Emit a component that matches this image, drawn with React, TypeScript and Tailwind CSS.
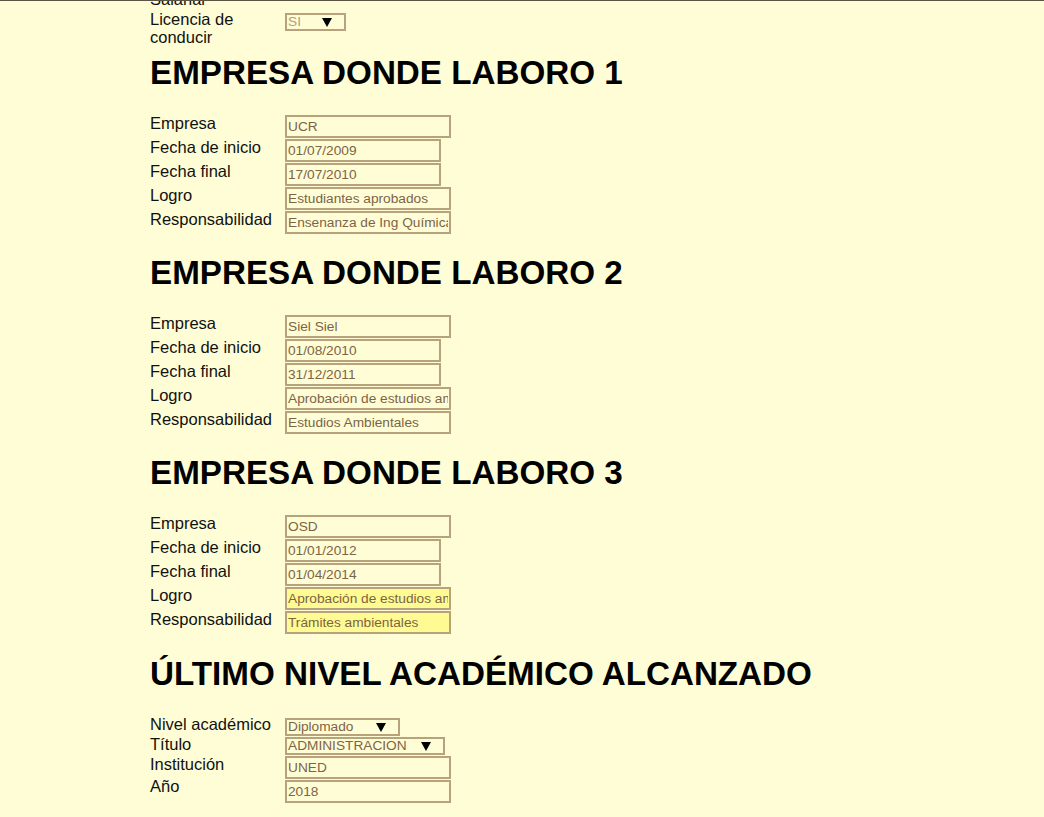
import React from "react";

type Field = { label: string; value: string; w: number; hl?: boolean };

const jobs: { title: string; fields: Field[] }[] = [
  {
    title: "EMPRESA DONDE LABORO 1",
    fields: [
      { label: "Empresa", value: "UCR", w: 166 },
      { label: "Fecha de inicio", value: "01/07/2009", w: 156 },
      { label: "Fecha final", value: "17/07/2010", w: 156 },
      { label: "Logro", value: "Estudiantes aprobados", w: 166 },
      { label: "Responsabilidad", value: "Ensenanza de Ing Química", w: 166 },
    ],
  },
  {
    title: "EMPRESA DONDE LABORO 2",
    fields: [
      { label: "Empresa", value: "Siel Siel", w: 166 },
      { label: "Fecha de inicio", value: "01/08/2010", w: 156 },
      { label: "Fecha final", value: "31/12/2011", w: 156 },
      { label: "Logro", value: "Aprobación de estudios ambientales", w: 166 },
      { label: "Responsabilidad", value: "Estudios Ambientales", w: 166 },
    ],
  },
  {
    title: "EMPRESA DONDE LABORO 3",
    fields: [
      { label: "Empresa", value: "OSD", w: 166 },
      { label: "Fecha de inicio", value: "01/01/2012", w: 156 },
      { label: "Fecha final", value: "01/04/2014", w: 156 },
      { label: "Logro", value: "Aprobación de estudios ambientales", w: 166, hl: true },
      { label: "Responsabilidad", value: "Trámites ambientales", w: 166, hl: true },
    ],
  },
];

function Caret() {
  return (
    <svg width="10" height="9" viewBox="0 0 10 9" className="shrink-0">
      <polygon points="0,0 10,0 5,9" fill="#000" />
    </svg>
  );
}

function FakeSelect({ value, w, light }: { value: string; w: number; light?: boolean }) {
  return (
    <div
      className={`flex h-[18px] items-center justify-between border-2 border-[#b8a27c] pl-px pr-[12px] text-[13.7px] leading-none ${
        light ? "text-[#b39d7b]" : "text-[#7d6445]"
      }`}
      style={{ width: w }}
    >
      <span>{value}</span>
      <Caret />
    </div>
  );
}

function TextBox({ value, w, hl }: { value: string; w: number; hl?: boolean }) {
  return (
    <input
      readOnly
      value={value}
      className={`h-[23px] border-2 border-[#b8a27c] px-px font-['Liberation_Sans',Arial,sans-serif] text-[13.7px] text-[#7d6445] outline-none ${
        hl ? "bg-[#fdfb92]" : "bg-transparent"
      }`}
      style={{ width: w }}
    />
  );
}

function Label({ children }: { children: React.ReactNode }) {
  return <div className="w-[135px] shrink-0 text-[16.5px] leading-[18px] text-[#111]">{children}</div>;
}

function Heading({ children, first }: { children: React.ReactNode; first?: boolean }) {
  return (
    <h1 className={`${first ? "mt-[8px]" : "mt-[19px]"} mb-[23px] text-[33.2px] font-bold leading-[38px] text-black`}>
      {children}
    </h1>
  );
}

export default function App() {
  return (
    <div className="h-[817px] overflow-hidden border-t border-[#5b5442] bg-[#fffdd6] font-['Liberation_Sans',Arial,sans-serif]">
      <div className="-mt-[11px] pl-[150px]">
        <div className="flex">
          <Label>Salarial</Label>
        </div>
        <div className="mt-[2px] flex items-start">
          <Label>
            Licencia de
            <br />
            conducir
          </Label>
          <div className="mt-[3px]">
            <FakeSelect value="SI" w={61} light />
          </div>
        </div>

        {jobs.map((job, i) => (
          <section key={job.title}>
            <Heading first={i === 0}>{job.title}</Heading>
            {job.fields.map((f) => (
              <div key={f.label} className="flex h-[24px] items-start">
                <div className="-mt-px">
                  <Label>{f.label}</Label>
                </div>
                <TextBox value={f.value} w={f.w} hl={f.hl} />
              </div>
            ))}
          </section>
        ))}

        <section>
          <h1 className="mt-[20px] mb-[25px] text-[33.2px] font-bold leading-[38px] text-black">
            ÚLTIMO NIVEL ACADÉMICO ALCANZADO
          </h1>
          <div className="flex h-[19px] items-start">
            <div className="-mt-[3px]">
              <Label>Nivel académico</Label>
            </div>
            <FakeSelect value="Diplomado" w={115} />
          </div>
          <div className="flex h-[19px] items-start">
            <div className="-mt-[2px]">
              <Label>Título</Label>
            </div>
            <FakeSelect value="ADMINISTRACION" w={160} />
          </div>
          <div className="flex h-[24px] items-start">
            <div className="-mt-px">
              <Label>Institución</Label>
            </div>
            <TextBox value="UNED" w={166} />
          </div>
          <div className="flex h-[24px] items-start">
            <div className="-mt-[3px]">
              <Label>Año</Label>
            </div>
            <TextBox value="2018" w={166} />
          </div>
        </section>
      </div>
    </div>
  );
}
